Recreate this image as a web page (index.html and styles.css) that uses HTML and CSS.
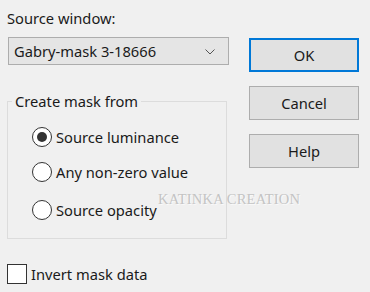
FILE: index.html
```html
<!DOCTYPE html>
<html>
<head>
  <title>Create Mask</title>
  <link rel="stylesheet" href="styles.css">
</head>
<body>
  <div class="dialog">
    <div class="left-col">
      <div class="field-label">Source window:</div>
      <div class="dropdown">
        <span>Gabry-mask 3-18666</span>
        <svg class="chevron" width="10" height="6" viewBox="0 0 10 6">
          <path d="M0.5 0.5 L5 5 L9.5 0.5" fill="none" stroke="#555" stroke-width="1"/>
        </svg>
      </div>

      <!-- mask source group -->
      <fieldset class="group">
        <legend>Create mask from</legend>
        <div class="radio-row first">
          <span class="radio checked"></span>
          <span>Source luminance</span>
        </div>
        <div class="radio-row second">
          <span class="radio"></span>
          <span>Any non-zero value</span>
        </div>
        <div class="radio-row third">
          <span class="radio"></span>
          <span>Source opacity</span>
        </div>
      </fieldset>

      <div class="check-row">
        <span class="checkbox"></span>
        <span>Invert mask data</span>
      </div>
    </div>

    <div class="right-col">
      <button class="btn default">OK</button>
      <button class="btn">Cancel</button>
      <button class="btn">Help</button>
    </div>

    <div class="watermark">KATINKA CREATION</div>
  </div>
</body>
</html>
```

FILE: styles.css
```css
body {
  margin: 0;
  background-color: #f0f0f0;
  font-family: "Noto Sans", sans-serif;
  font-size: 14.7px;
  color: #1a1a1a;
}

.dialog {
  position: relative;
  display: flex;
  width: 370px;
  height: 292px;
  box-sizing: border-box;
  padding: 9px 0 0 7px;
}

.left-col {
  width: 222px;
}

.field-label {
  height: 19px;
  line-height: 19px;
}

.dropdown {
  display: flex;
  align-items: center;
  justify-content: space-between;
  margin: 9px 0 0 1px;
  height: 26px;
  padding: 0 13px 0 5px;
  background-color: #e5e5e5;
  border: 1px solid #adadad;
}

.chevron {
  margin-top: 1px;
}

.group {
  margin: 26px 2px 0 0;
  padding: 0;
  height: 146px;
  border: 1px solid #dcdcdc;
}

.group legend {
  margin-left: 4px;
  padding: 0 3px;
}

.radio-row {
  display: flex;
  align-items: center;
  gap: 4px;
  height: 20px;
  margin-left: 24px;
}

.radio-row.first {
  margin-top: 16px;
}

.radio-row.second {
  margin-top: 15px;
}

.radio-row.third {
  margin-top: 18px;
}

.radio {
  width: 18px;
  height: 18px;
  border: 1px solid #333;
  border-radius: 50%;
  background-color: #fff;
  display: flex;
  align-items: center;
  justify-content: center;
}

.radio.checked::after {
  content: "";
  width: 10px;
  height: 10px;
  border-radius: 50%;
  background-color: #333;
}

.check-row {
  display: flex;
  align-items: center;
  gap: 4px;
  margin-top: 25px;
  height: 20px;
}

.checkbox {
  width: 18px;
  height: 18px;
  border: 1px solid #333;
  background-color: #fff;
}

.right-col {
  display: flex;
  flex-direction: column;
  margin: 29px 0 0 20px;
}

.btn {
  width: 110px;
  height: 34px;
  margin-bottom: 14px;
  background-color: #e1e1e1;
  border: 1px solid #adadad;
  font-family: "Noto Sans", sans-serif;
  font-size: 14.7px;
  color: #1a1a1a;
  padding: 0;
}

.btn.default {
  border: 2px solid #0078d7;
}

.watermark {
  position: absolute;
  left: 158px;
  top: 191px;
  font-family: "Liberation Serif", serif;
  font-size: 14.5px;
  color: #c4c4c4;
  text-shadow: 1px 1px 0 #fafafa;
  letter-spacing: 0.2px;
}
```
